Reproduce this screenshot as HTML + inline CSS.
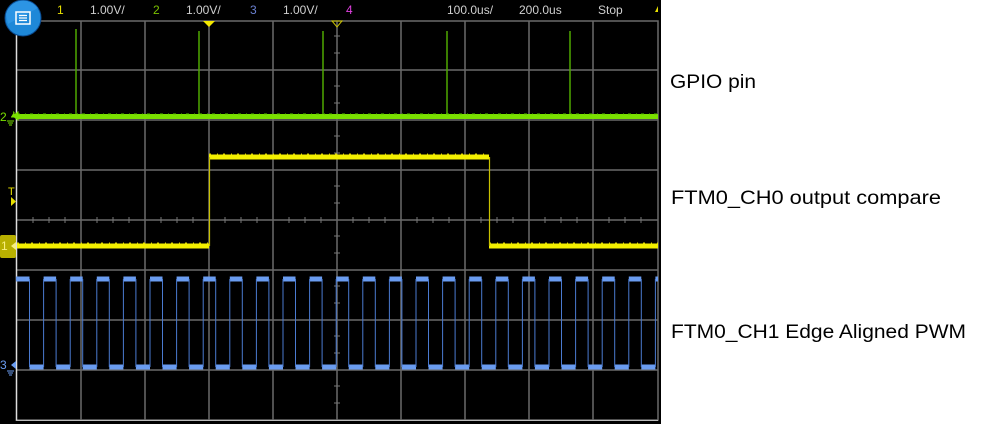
<!DOCTYPE html>
<html><head><style>
html,body{margin:0;padding:0;background:#fff;width:983px;height:424px;overflow:hidden}
svg{display:block}
</style></head><body>
<svg width="983" height="424" xmlns="http://www.w3.org/2000/svg">
<rect x="0" y="0" width="661" height="424" fill="#000"/>
<g stroke="#6a6a6a" stroke-width="1.5" fill="none">
<path d="M81 21V420M145 21V420M209 21V420M273 21V420M337 21V420M401 21V420M465 21V420M529 21V420M593 21V420"/>
<path d="M16 70H658M16 120H658M16 170H658M16 220H658M16 270H658M16 320H658M16 370H658"/>
<path d="M16 21H658V420H16"/>
</g>
<line x1="16.5" y1="21" x2="16.5" y2="421" stroke="#ddd" stroke-width="1.5"/>
<line x1="16" y1="420.5" x2="658" y2="420.5" stroke="#bbb" stroke-width="1"/>
<g stroke="#777" stroke-width="1">
<path d="M33 217v6M49 217v6M65 217v6M97 217v6M113 217v6M129 217v6M161 217v6M177 217v6M193 217v6M225 217v6M241 217v6M257 217v6M289 217v6M305 217v6M321 217v6M353 217v6M369 217v6M385 217v6M417 217v6M433 217v6M449 217v6M481 217v6M497 217v6M513 217v6M545 217v6M561 217v6M577 217v6M609 217v6M625 217v6M641 217v6"/>
<path d="M334 36h6M334 53h6M334 86h6M334 103h6M334 136h6M334 153h6M334 186h6M334 203h6M334 236h6M334 253h6M334 286h6M334 303h6M334 336h6M334 353h6M334 386h6M334 403h6"/>
</g>
<g stroke="#4fa800" stroke-width="1.5">
<path d="M76 29V117M199 31V117M323 31V117M447 31V117M570 31V117"/>
</g>
<line x1="17" y1="116.5" x2="658" y2="116.5" stroke="#7ae000" stroke-width="5"/>
<line x1="17" y1="114" x2="658" y2="114" stroke="#5cc000" stroke-width="1" stroke-dasharray="3 5 1 4"/>
<!-- yellow -->
<path d="M17 246H209M209 157H489M489 246H658" stroke="#f4f000" stroke-width="5" fill="none"/>
<line x1="17" y1="243" x2="209" y2="243" stroke="#d8d000" stroke-width="1" stroke-dasharray="2 6 1 5"/>
<line x1="209" y1="154" x2="489" y2="154" stroke="#d8d000" stroke-width="1" stroke-dasharray="2 6 1 5"/>
<line x1="489" y1="243" x2="658" y2="243" stroke="#d8d000" stroke-width="1" stroke-dasharray="2 6 1 5"/>
<path d="M209.5 246V157M489.5 157V246" stroke="#c8c000" stroke-width="1.2"/>
<!-- blue -->
<line x1="17" y1="279" x2="658" y2="279" stroke="#6a9cf0" stroke-width="5" stroke-dasharray="12.5 14.1"/>
<line x1="16" y1="279" x2="17" y2="279" stroke="#6a9cf0" stroke-width="5"/>
<line x1="29.5" y1="367" x2="658" y2="367" stroke="#6a9cf0" stroke-width="5" stroke-dasharray="14.1 12.5"/>
<path stroke="#4a7ad0" stroke-width="1" fill="none" d="M29.5 279V367M56.1 279V367M82.7 279V367M109.3 279V367M135.9 279V367M162.5 279V367M189.1 279V367M215.7 279V367M242.3 279V367M268.9 279V367M295.5 279V367M322.1 279V367M348.7 279V367M375.3 279V367M401.9 279V367M428.5 279V367M455.1 279V367M481.7 279V367M508.3 279V367M534.9 279V367M561.5 279V367M588.1 279V367M614.7 279V367M641.3 279V367M43.6 279V367M70.2 279V367M96.8 279V367M123.4 279V367M150 279V367M176.6 279V367M203.2 279V367M229.8 279V367M256.4 279V367M283 279V367M309.6 279V367M336.2 279V367M362.8 279V367M389.4 279V367M416 279V367M442.6 279V367M469.2 279V367M495.8 279V367M522.4 279V367M549 279V367M575.6 279V367M602.2 279V367M628.8 279V367M655.4 279V367"/>
<path d="M203 21h12l-6 6z" fill="#f4e800"/>
<path d="M332 21h10l-5 6z" fill="none" stroke="#c8c000"/>
<g font-family="Liberation Sans, sans-serif" font-size="12">
<text x="0" y="121" fill="#7ae000">2</text>
<path d="M11 117h3v-5M14 112h-1M13 116l5-4v8z" stroke="#7ae000" fill="#7ae000" stroke-width="1"/>
<path d="M7 121h7M8 123h5M9 125h3" stroke="#7ae000"/>
<text x="8" y="195" fill="#e8e000" font-size="11">T</text>
<path d="M11 197v9l5-4.5z" fill="#e8e000"/>
<rect x="0" y="235" width="16" height="23" rx="2" fill="#b8b000"/>
<text x="1" y="250" fill="#f8f080">1</text>
<path d="M11 246l5-4v8z" fill="#f8f080"/>
<text x="0" y="369" fill="#6a9cf0">3</text>
<path d="M11 365l5-4v8z" fill="#6a9cf0"/>
<path d="M7 371h7M8 373h5M9 375h3" stroke="#6a9cf0"/>
</g>
<g font-family="Liberation Sans, sans-serif" font-size="12" fill="#cfcfcf">
<text x="57" y="14" fill="#e8e000">1</text>
<text x="90" y="14">1.00V/</text>
<text x="153" y="14" fill="#7ac000">2</text>
<text x="186" y="14">1.00V/</text>
<text x="250" y="14" fill="#6a80d0">3</text>
<text x="283" y="14">1.00V/</text>
<text x="346" y="14" fill="#e040e0">4</text>
<text x="447" y="14">100.0us/</text>
<text x="519" y="14">200.0us</text>
<text x="598" y="14">Stop</text>
</g>
<path d="M655 12l3-6v6z" fill="#e8e000"/>
<circle cx="23" cy="18" r="18" fill="#1e88d8" stroke="#0a4a90" stroke-width="1"/>
<path d="M6 14A18 18 0 0 1 38 8L8 24z" fill="#3aa0f0" opacity="0.5"/>
<rect x="16" y="12" width="14" height="12" fill="none" stroke="#fff" stroke-width="1.5"/>
<path d="M19 15.5h8M19 18h8M19 20.5h8" stroke="#fff" stroke-width="1.2"/>
<g font-family="Liberation Sans, sans-serif" font-size="19" fill="#000">
<text x="670" y="88" textLength="86" lengthAdjust="spacingAndGlyphs">GPIO pin</text>
<text x="671" y="204" textLength="270" lengthAdjust="spacingAndGlyphs">FTM0_CH0 output compare</text>
<text x="671" y="338" textLength="295" lengthAdjust="spacingAndGlyphs">FTM0_CH1 Edge Aligned PWM</text>
</g>
</svg>
</body></html>
